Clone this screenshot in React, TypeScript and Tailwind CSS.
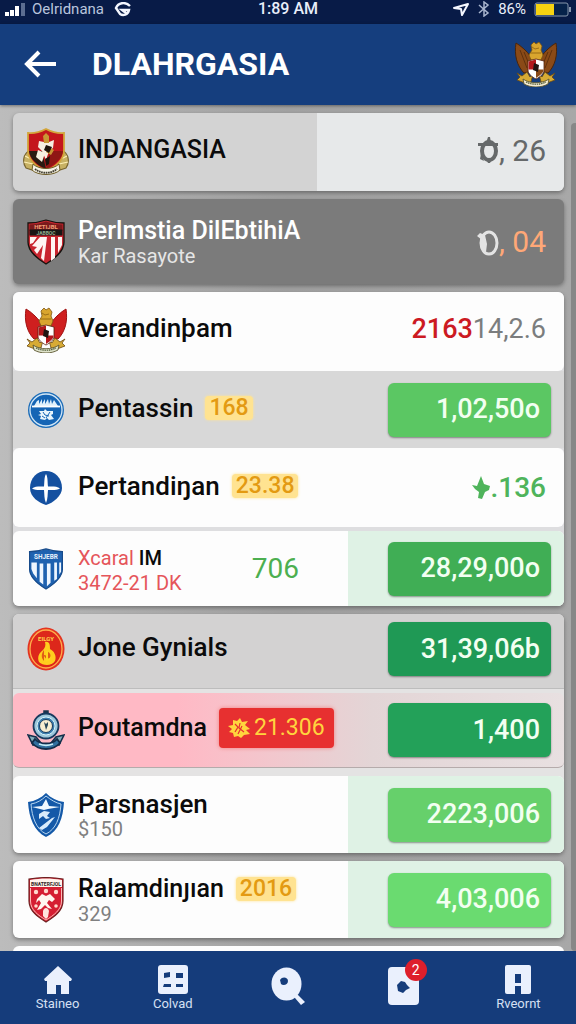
import type { ReactNode } from "react";

function GarudaCrest({ tone, className }: { tone: "brown" | "red"; className: string }) {
  const wing = tone === "brown" ? "#8a4a17" : "#cf1f1f";
  const edge = tone === "brown" ? "#4c2508" : "#a01212";
  return (
    <svg viewBox="0 0 44 46" className={className} aria-hidden="true">
      <path d="M2 2c5 3 11 8 15 14l1 14-8 2C3 25 0 14 2 2z" fill={wing} stroke={edge} strokeWidth="1" />
      <path d="M42 2c-5 3-11 8-15 14l-1 14 8 2C41 25 44 14 42 2z" fill={wing} stroke={edge} strokeWidth="1" />
      {tone === "brown" && <path d="M6 9l7 18M10 11l5 12M38 9l-7 18M34 11l-5 12" stroke={edge} strokeWidth=".7" fill="none" />}
      <path d="M3 32l5 3 5-4 3 5 3-3-2 8-6 1-8-3 3-3zM41 32l-5 3-5-4-3 5-3-3 2 8 6 1 8-3-3-3z" fill="#d7ab35" stroke="#6b4a12" strokeWidth=".8" />
      <path d="M17 4l3-3 2 2 3-2 3 4-1 4 2 5-2 5H17l-2-5 3-5z" fill="#d9a52e" stroke="#7d5513" strokeWidth=".8" />
      <path d="M18 6l3 2 4-1M17 12h10" stroke="#8b6110" strokeWidth=".8" fill="none" />
      <path d="M14 20l8-2 8 2v9c0 4-4 7-8 9-4-2-8-5-8-9z" fill="#fff" stroke="#54210b" strokeWidth=".8" />
      <path d="M14.500 20.500l7.500-2v10h-7.500z" fill="#b3191c" />
      <path d="M22 28.500h7.500c0 4-4 6-7.500 8.500z" fill={tone === "brown" ? "#8a4a17" : "#b3191c"} />
      <path d="M20 22l5 2-1 7-5-2z" fill="#221512" />
      <path d="M9 38c7 5 19 5 26 0l-1 5c-7 4-17 4-24 0z" fill={tone === "brown" ? "#f3ead2" : "#dfe3cb"} stroke="#5b5731" strokeWidth=".9" />
      <path d="M12 41c6 3 14 3 20 0" stroke="#4d5a35" strokeWidth="1.200" strokeDasharray="1.500 .7" fill="none" />
    </svg>
  );
}

function ShieldCrest() {
  return (
    <svg viewBox="0 0 46 48" className="h-12 w-[46px]" aria-hidden="true">
      <path d="M7 22c-7 4-8 12-4 18l12 4M39 22c7 4 8 12 4 18l-12 4" fill="#c7b163" stroke="#7a6630" strokeWidth="1.200" />
      <path d="M2 28l8 4M1 34l9 2M44 28l-8 4M45 34l-9 2" stroke="#fff0b5" strokeWidth="1.200" />
      <path d="M5 5c7 1 12-1 18-4 6 3 11 5 18 4v17c0 10-9 17-18 21C14 39 5 32 5 22z" fill="#c4161c" stroke="#d3a53a" strokeWidth="1.800" />
      <path d="M27 23h13c-1 8-9 14-17 18z" fill="#8f1714" />
      <path d="M6 23h13l4 18C14 37 7 31 6 23z" fill="#2a1a12" />
      <path d="M16 13l5 1 2-5 3 5 5-2-1 8-4 3-3 9-4-9-4-4z" fill="#f7eee2" />
      <path d="M20 8l3-3 3 3v7h-5zM26 19l5 3-3 5-5-3z" fill="#c99634" />
      <path d="M15 22l7 3-3 9-6-5z" fill="#f6efe0" />
      <path d="M23 17l6 2-3 6-5-3zM22 31l5-3-1 8-3 2z" fill="#1f130d" />
      <path d="M10 36c6 6 20 6 26 0l1 6c-6 6-22 6-28 0z" fill="#f6f3e6" stroke="#6d5c25" strokeWidth="1" />
      <path d="M12 41c6 5 16 5 22 0" stroke="#444132" strokeWidth="1.800" strokeDasharray="1.700 .6" fill="none" />
    </svg>
  );
}

function StripedShield({ tone, className }: { tone: "red" | "blue"; className: string }) {
  const red = tone === "red";
  return (
    <svg viewBox="0 0 38 46" className={className} aria-hidden="true">
      <path d="M1 4c7 0 12-1 18-3 6 2 11 3 18 3v19c0 10-10 17-18 22C11 40 1 33 1 23z" fill={red ? "#c9252f" : "#1f62b0"} stroke={red ? "#16130f" : "#174b8b"} strokeWidth="1.300" />
      {red && <path d="M2.500 5.500c6 0 11-1 16.500-3 5.500 2 10.500 3 16.500 3V12h-33z" fill="#7a1a1c" />}
      {red && <path d="M2.500 10.500h33v6h-33z" fill="#181514" />}
      <text x="19" y={red ? 9.500 : 12.500} textAnchor="middle" fontSize={red ? 6 : 7} fontWeight="700" fill={red ? "#f1a078" : "#e8f2fc"} fontFamily="Roboto, sans-serif">{red ? "HETIJBL" : "SHJEBR"}</text>
      {red ? (
        <>
          <text x="19" y="15.500" textAnchor="middle" fontSize="5" fontWeight="700" fill="#8faa8d" fontFamily="Roboto, sans-serif">JABBOC</text>
          <path d="M3 18h7l-4 6-3 1zM13 18h7l-3 24-3-3 2-13-6 9-3-4 3-3-5-1zM24 18h4v21l-4 3zM31 18h4v8l-4 8z" fill="#fff5f3" />
        </>
      ) : (
        <path d="M3 16h6v17l-4-5-2-5zM12 17h4v23l-4-3zM20 17h4v21l-4 4zM28 16h3v18l-3 2zM33.500 16h2v10l-2 3z" fill="#eef6ff" />
      )}
    </svg>
  );
}

function BlueSeal() {
  return (
    <svg viewBox="0 0 38 38" className="size-[38px]" aria-hidden="true">
      <circle cx="19" cy="19" r="18" fill="#1b6cb8" />
      <circle cx="19" cy="19" r="16" fill="#1565b5" stroke="#d3e7f6" strokeWidth="1.300" />
      <path d="M7 15l3-5 2-1v4l3-5v5l3-5v5l3-5 1 5 2-5 1 5 2-4 4 6z" fill="#dff0fb" />
      <path d="M5 15.500h28" stroke="#fff" strokeWidth="1.800" />
      <path d="M12 20h5l1-2 2 2h6v3l-2 1 3 4-5 1-2-2-2 2-5-1 1-3-3-1 3-1z" fill="#e9f5fc" />
      <path d="M16 21l2 3 4 1M23 21l-4 6M15 25l3 2" stroke="#1565b5" strokeWidth="1" fill="none" />
    </svg>
  );
}

function BlueCross() {
  return (
    <svg viewBox="0 0 34 36" className="h-9 w-[34px]" aria-hidden="true">
      <path d="M17 1c9 0 16 7 16 17 0 8-9 15-16 17C10 33 1 27 1 18 1 8 8 1 17 1z" fill="#1450a0" />
      <path d="M17 4c2 3 1.500 9 2 12.500 4 0 9-.5 12 2-3 2-8 1.500-12 1.500-.5 4 0 9-2 13-2-4-1.500-9-2-13-4 0-9 .5-12-1.500 3-2.500 8-2 12-2 .5-3.500 0-9.500 2-12.500z" fill="#fff" />
    </svg>
  );
}

function FlameSeal() {
  return (
    <svg viewBox="0 0 38 44" className="h-11 w-[38px]" aria-hidden="true">
      <ellipse cx="19" cy="22" rx="18.500" ry="21.500" fill="#e33420" />
      <ellipse cx="19" cy="22" rx="16" ry="19" fill="#dd271b" stroke="#ffad4b" strokeWidth="1.300" />
      <text x="19" y="13.500" textAnchor="middle" fontSize="6" fontWeight="700" fill="#ffd24a" fontFamily="Roboto, sans-serif">EILGY</text>
      <path d="M18 15c5-1 5 4 5 7 4 2 7 7 5 12-3 5-12 5-16 1-2-5 0-9 4-12 2-2 3-5 2-8z" fill="#ffce1e" />
      <path d="M17 23c-3 4-3 8 0 11v-5l3 4c5-2 4-7 1-8v4l-4-1z" fill="#e15c16" />
      <path d="M20 24v9l3-1" stroke="#ffd51e" strokeWidth="2" fill="none" />
    </svg>
  );
}

function DiverCrest() {
  return (
    <svg viewBox="0 0 38 40" className="h-10 w-[38px]" aria-hidden="true">
      <path d="M1 25l8 2 5 6-8 2zM37 25l-8 2-5 6 8 2z" fill="#82adb9" stroke="#15304b" strokeWidth="1.600" />
      <path d="M8 29c5 6 17 6 22 0l3 4c-7 8-21 8-28 0z" fill="#31709f" stroke="#132d4a" strokeWidth="1.800" />
      <path d="M12 34c5 2 9 2 14 0" stroke="#c8edf6" strokeWidth="1.600" fill="none" />
      <path d="M17 4V1h4v3" fill="#1b354c" stroke="#1b354c" strokeWidth="1.500" />
      <circle cx="19" cy="16" r="12.500" fill="#9bc7db" stroke="#173a5d" strokeWidth="1.800" />
      <circle cx="19" cy="16" r="9" fill="#3d7eae" stroke="#d9f5fb" />
      <circle cx="19" cy="16" r="6.500" fill="#f7edd1" stroke="#173a5d" />
      <path d="M17 12l2 2 2-2v3l-2 5-1-4" fill="#27465a" />
    </svg>
  );
}

function BlueShield() {
  return (
    <svg viewBox="0 0 38 46" className="h-[46px] w-[38px]" aria-hidden="true">
      <path d="M19 1c5 5 11 8 18 9-1 16-5 29-18 35C7 39 2 26 1 10 8 9 14 6 19 1z" fill="#1459a8" />
      <path d="M19 4c5 4 10 7 15 8-1 14-5 25-15 30C9 37 5 25 4 12c6-1 11-4 15-8z" fill="none" stroke="#b6d5f0" strokeWidth="1" />
      <path d="M19 7l3 7 11 1-12 2-4 1-12-3 10-1z" fill="#f0f8ff" />
      <path d="M12 22l5-3 6 1-3 4 3 2-4 1-3-3-4 3zM12 36l13-10 3-1-8 10-5 3z" fill="#d9ecfb" />
    </svg>
  );
}

function RedShield() {
  return (
    <svg viewBox="0 0 36 46" className="h-[46px] w-9" aria-hidden="true">
      <path d="M1 2c12-2 22-2 34 0v22c0 10-9 16-17 21C10 40 1 34 1 24z" fill="#d51e32" stroke="#6d2020" strokeWidth="1.200" />
      <path d="M2 3c11-2 21-2 32 0v7H2z" fill="#fff4ed" />
      <text x="18" y="8.500" textAnchor="middle" fontSize="5" fontWeight="700" fill="#332422" fontFamily="Roboto, sans-serif">BNATERFJOL</text>
      <path d="M2.500 11v13c0 9 8 14.500 15.500 19C25.500 38.500 33.500 33 33.500 24V11" fill="none" stroke="#ffb8b6" strokeWidth="1" />
      <path d="M9 22l5-5 4 2 4-2 5 5-3 3-3-2-2 3 5 6-4-1-3-3-4 4-4 1 4-7-2-3-3 3z" fill="#fff6ef" />
      <path d="M15 34c1-4 5-4 6 0l-1 6-2 2-3-3z" fill="#ffe4dd" />
      <circle cx="8" cy="15" r="2.200" fill="#ffd9cc" />
      <circle cx="18" cy="14" r="2.200" fill="#ffd9cc" />
      <circle cx="28" cy="15" r="2.200" fill="#ffd9cc" />
      <circle cx="8" cy="29" r="1.800" fill="#ffd9cc" />
      <circle cx="28" cy="29" r="1.800" fill="#ffd9cc" />
    </svg>
  );
}

function Spark({ className }: { className: string }) {
  return (
    <svg viewBox="0 0 18 24" className={className} aria-hidden="true">
      <path d="M9 0l3 8 6 2-1 4-4 2-3 7-4-1 1-6-4-3-3-4 5 1z" fill="currentColor" />
    </svg>
  );
}

function Burst() {
  return (
    <svg viewBox="0 0 22 20" className="h-5 w-[22px]" aria-hidden="true">
      <path d="M5 2l4 1 3-3 2 4 6-1-3 4 5 4-4 1 4 4-6 1-3 3-3-2-4 1-1-4-4-1 3-3-4-3 5-1z" fill="currentColor" />
      <path d="M7 6l3 3-3 5M12 5l-1 5 5 4M14 8l-4 8" stroke="#e73030" strokeWidth="1.200" fill="none" />
    </svg>
  );
}

function RingMark({ dark }: { dark: boolean }) {
  return (
    <svg viewBox="0 0 22 28" className="h-7 w-[22px]" aria-hidden="true">
      <ellipse cx="12" cy="15" rx={dark ? 7 : 8} ry={dark ? 9 : 11} fill="none" stroke="currentColor" strokeWidth={dark ? 4 : 3} />
      {dark ? (
        <path d="M1 7h8l2-6h2l1 6h7v3H1zM4 18l3 7-4-2zM9 23h6l-2 4h-2z" fill="currentColor" />
      ) : (
        <path d="M0 8l3-3 5 2 2 9-1 8-5-3 1-9z" fill="currentColor" />
      )}
    </svg>
  );
}

function Tag({ children }: { children: ReactNode }) {
  return <span className="rounded-sm bg-[#ffe391] px-1 text-[23px] leading-6 text-[#e39a12] shadow-[0_0_3px_#ffe391]">{children}</span>;
}

function Amount({ tone, children }: { tone: "lime" | "mint" | "leaf" | "green" | "forest" | "jade"; children: ReactNode }) {
  const tones = {
    lime: "bg-[#5bc763]",
    mint: "bg-[#66d06b]",
    leaf: "bg-[#6adb70]",
    green: "bg-[#40ae55]",
    forest: "bg-[#1f9955]",
    jade: "bg-[#23a159]",
  };
  return (
    <button type="button" className={`h-[54px] w-[163px] rounded-md pr-[11px] text-right text-[27px] font-medium text-[#f2fff1] shadow-[0_1px_2px_rgba(0,0,0,0.4)] ${tones[tone]}`}>
      {children}
    </button>
  );
}

type RowProps = {
  crest: ReactNode;
  name: ReactNode;
  note?: ReactNode;
  extra?: ReactNode;
  end: ReactNode;
  className: string;
  nameSize?: string;
  endClassName?: string;
};

function Row({ crest, name, note, extra, end, className, nameSize = "text-[26px]", endClassName = "w-[216px] pr-[13px]" }: RowProps) {
  return (
    <li className={`flex shrink-0 overflow-hidden ${className}`}>
      <div className="flex min-w-0 flex-1 items-center pl-[10px]">
        <span className="flex w-[46px] shrink-0 justify-center">{crest}</span>
        <div className={`ml-[9px] whitespace-nowrap ${note ? "" : "pb-1"}`}>
          <div className={`flex items-center gap-3 leading-7 font-medium text-[#0b0b0b] ${nameSize}`}>{name}</div>
          {note && <div className="text-xl leading-[22px]">{note}</div>}
        </div>
        {extra}
      </div>
      <div className={`flex shrink-0 items-center justify-end ${endClassName}`}>{end}</div>
    </li>
  );
}

const shadow = "shadow-[0_2px_4px_rgba(0,0,0,0.35)]";
const tint = "w-[216px] pr-[13px] bg-[#dff2e5]";

function StatusBar() {
  return (
    <div className="grid h-6 shrink-0 grid-cols-[1fr_auto_1fr] items-start bg-[#081b47] text-base leading-[18px] text-[#e8eefa]">
      <div className="flex items-center gap-[6px] pl-1">
        <svg viewBox="0 0 22 15" className="h-[15px] w-[22px]" aria-hidden="true">
          <path d="M1 10h4v4H1zM6 8h4v6H6zM11 4h4v10h-4z" fill="#fff" />
          <path d="M17 1h4v13h-4z" fill="#5c6d90" />
        </svg>
        <span className="text-[15px] text-[#b9c5dd]">Oelridnana</span>
        <svg viewBox="0 0 18 15" className="ml-1 h-[15px] w-[18px]" aria-hidden="true">
          <path d="M16 4C11-1 4 1 2 6l4 6c3 2 8 1 9-4H8l4 3" fill="none" stroke="#f4f7ff" strokeWidth="2.400" />
        </svg>
      </div>
      <span className="font-medium">1:89 AM</span>
      <div className="flex items-center justify-end gap-2 pr-1">
        <svg viewBox="0 0 18 15" className="h-[15px] w-[18px]" aria-hidden="true">
          <path d="M2 6l14-4-6 11-1-6z" fill="none" stroke="#f4f7ff" strokeWidth="2" strokeLinejoin="round" />
        </svg>
        <svg viewBox="0 0 12 16" className="h-4 w-3" aria-hidden="true">
          <path d="M1 4l9 8-4 3V1l4 3-9 8" fill="none" stroke="#a9b6cf" strokeWidth="1.500" />
        </svg>
        <span className="text-[15px]">86%</span>
        <svg viewBox="0 0 38 15" className="h-[15px] w-[38px]" aria-hidden="true">
          <rect x="1" y="1" width="33" height="13" rx="2" fill="#06224a" stroke="#8797ad" />
          <path d="M2 2h18v11H2z" fill="#f6d211" />
          <path d="M35 5h2v5h-2z" fill="#8797ad" />
        </svg>
      </div>
    </div>
  );
}

function NavItem({ label, name, children }: { label?: string; name: string; children: ReactNode }) {
  return (
    <a href={`#${name.toLowerCase()}`} aria-label={name} className="flex flex-col items-center pt-[14px] text-[13px] leading-4 text-[#d5e0f3]">
      {children}
      {label && <span className="mt-[2px]">{label}</span>}
    </a>
  );
}

export default function App() {
  return (
    <div className="flex h-screen flex-col overflow-hidden bg-[#a5a5a5] font-['Roboto',sans-serif]">
      <StatusBar />
      <header className="z-10 flex h-[81px] shrink-0 items-center bg-[#153e7e] pr-[18px] pb-[2px] pl-6 shadow-[0_1px_3px_rgba(0,0,0,0.4)]">
        <button type="button" aria-label="Back" className="text-white">
          <svg viewBox="0 0 32 28" className="h-7 w-8" fill="none" stroke="currentColor" strokeWidth="4" aria-hidden="true">
            <path d="M15 2L3 14l12 12M3 14h29" />
          </svg>
        </button>
        <h1 className="ml-9 flex-1 text-[32px] leading-10 font-bold text-white">DLAHRGASIA</h1>
        <GarudaCrest tone="brown" className="h-[46px] w-11" />
      </header>

      <main className="relative min-h-0 flex-1 overflow-hidden bg-linear-to-r from-[#bcbcbc] via-[#a2a2a2] to-[#a8a8a8] pt-2 pr-3 pl-[13px]">
        <div className="absolute top-[18px] right-0 bottom-0 w-[5px] rounded-l-sm bg-[#878787]" />
        <ul className="flex flex-col gap-2">
          <Row
            crest={<ShieldCrest />}
            name={<span>INDANGASIA</span>}
            nameSize="text-[25px]"
            className={`h-[78px] rounded-md bg-[#d3d3d3] ${shadow}`}
            endClassName="w-[247px] pr-[18px] pb-1 bg-[#e7e9ea]"
            end={<span className="flex items-center text-[30px] text-[#66696a]"><RingMark dark /><span className="whitespace-pre">, 26</span></span>}
          />
          <Row
            crest={<StripedShield tone="red" className="h-[46px] w-[38px]" />}
            name={<span className="text-white">Perlmstia DilEbtihiA</span>}
            note={<span className="text-[#e6e6e6]">Kar Rasayote</span>}
            nameSize="text-[25px]"
            className={`h-[85px] rounded-md bg-[#7b7b7b] ${shadow}`}
            endClassName="w-[120px] pr-[18px]"
            end={<span className="flex items-center text-[30px] text-[#ffa877]"><span className="text-[#e3e3e3]"><RingMark dark={false} /></span><span className="whitespace-pre">, 04</span></span>}
          />
          <li>
            <ul className={`flex flex-col rounded-md bg-[#dedee0] ${shadow}`}>
              <Row
                crest={<GarudaCrest tone="red" className="h-[46px] w-11" />}
                name={<span>Verandinþam</span>}
                className="h-[79px] rounded-md bg-[#fdfdfd] pb-1"
                end={<span className="pr-[5px] text-[27px] text-[#7b7d7e]"><span className="font-medium text-[#cc1a22]">2163</span>14,2.6</span>}
              />
              <Row
                crest={<BlueSeal />}
                name={<><span>Pentassin</span><Tag>168</Tag></>}
                className="h-[77px] bg-[#d8d8d8]"
                end={<Amount tone="lime">1,02,50o</Amount>}
              />
              <Row
                crest={<BlueCross />}
                name={<><span>Pertandiŋan</span><Tag>23.38</Tag></>}
                className="mb-1 h-[79px] rounded-md bg-[#fdfdfd]"
                end={<span className="flex items-center pr-[5px] text-[28px] font-medium text-[#4fb45b]"><Spark className="h-6 w-[18px]" />.136</span>}
              />
              <Row
                crest={<StripedShield tone="blue" className="h-[42px] w-9" />}
                name={<span><span className="font-normal text-[#e5555a]">Xcaral</span> IM</span>}
                note={<span className="text-[#e5555a]">3472-21 DK</span>}
                nameSize="text-xl"
                extra={<span className="mr-[49px] ml-auto text-[28px] text-[#4caf50]">706</span>}
                className="h-[75px] rounded-md bg-[#fdfdfd]"
                endClassName={tint}
                end={<Amount tone="green">28,29,00o</Amount>}
              />
            </ul>
          </li>
          <li>
            <ul className={`flex flex-col rounded-md bg-[#e4e3e3] ${shadow}`}>
              <Row
                crest={<FlameSeal />}
                name={<span>Jone Gynials</span>}
                className="mb-1 h-[75px] rounded-t-md border-b border-[#bdbdbd] bg-[#d3d2d2] pb-1"
                end={<Amount tone="forest">31,39,06b</Amount>}
              />
              <Row
                crest={<DiverCrest />}
                name={
                  <>
                    <span>Poutamdna</span>
                    <span className="flex h-10 items-center gap-1 rounded-sm bg-[#e73030] px-[9px] text-[23px] font-normal text-[#ffd43e] shadow-[0_0_4px_#f08080]">
                      <Burst />
                      21.306
                    </span>
                  </>
                }
                nameSize="text-[25px]"
                className="mb-2 h-[75px] rounded-md border-b border-[#b5abab] bg-linear-to-r from-[#ffb9c5] from-30% via-[#e3d5d6] via-65% to-[#e8e0e1]"
                end={<Amount tone="jade">1,400</Amount>}
              />
              <Row
                crest={<BlueShield />}
                name={<span>Parsnasjen</span>}
                note={<span className="text-[#808080]">$150</span>}
                className="h-[77px] rounded-md bg-[#fdfdfd]"
                endClassName={tint}
                end={<Amount tone="mint">2223,006</Amount>}
              />
            </ul>
          </li>
          <Row
            crest={<RedShield />}
            name={<><span>Ralamdinȷıan</span><Tag>2016</Tag></>}
            note={<span className="text-[#808080]">329</span>}
            nameSize="text-[25px]"
            className={`h-[77px] rounded-md bg-[#fdfdfd] ${shadow}`}
            endClassName={tint}
            end={<Amount tone="leaf">4,03,006</Amount>}
          />
          <li className="h-[77px] rounded-md bg-[#fdfdfd]" />
        </ul>
      </main>

      <nav aria-label="Main" className="grid h-[73px] shrink-0 grid-cols-5 bg-[#153c7b]">
        <NavItem name="Staineo" label="Staineo">
          <svg viewBox="0 0 30 29" className="h-[29px] w-[30px]" aria-hidden="true">
            <path d="M15 1l14 13-1 2h-2v13h-8v-9h-5v9H4V16H2l-1-2z" fill="#eaf0fd" />
          </svg>
        </NavItem>
        <NavItem name="Colvad" label="Colvad">
          <svg viewBox="0 0 30 29" className="h-[29px] w-[30px]" aria-hidden="true">
            <rect width="30" height="29" rx="3" fill="#eaf0fd" />
            <path d="M6 8l6-1v5l-6 1zM18 8h7v5h-7zM6 19h7v3H5zM18 19h7v3h-7z" fill="#153c7b" />
          </svg>
        </NavItem>
        <NavItem name="Search">
          <svg viewBox="0 0 34 38" className="mt-[2px] h-[38px] w-[34px]" aria-hidden="true">
            <ellipse cx="15.500" cy="17" rx="15" ry="16.500" fill="#eaf0fd" />
            <path d="M22 27l5 1 7 7-4 3-6-7z" fill="#eaf0fd" />
            <path d="M9 13c2-4 8-3 8 1s-5 5-7 3z" fill="#153c7b" />
          </svg>
        </NavItem>
        <NavItem name="Messages">
          <span className="relative mt-[2px]">
            <svg viewBox="0 0 31 38" className="h-[38px] w-[31px]" aria-hidden="true">
              <rect width="31" height="38" rx="4" fill="#eaf0fd" />
              <path d="M9 18l4-4 4 1 2 3 3 3-4 2-3 3-5-2z" fill="#153c7b" />
            </svg>
            <span className="absolute -top-2 -right-2 flex size-[22px] items-center justify-center rounded-full bg-[#de1f2b] text-sm text-white">2</span>
          </span>
        </NavItem>
        <NavItem name="Rveornt" label="Rveornt">
          <svg viewBox="0 0 26 29" className="h-[29px] w-[26px]" aria-hidden="true">
            <rect width="26" height="29" rx="2" fill="#eaf0fd" />
            <path d="M10 9h6v9h-6zM10 21h6v8h-6z" fill="#153c7b" />
          </svg>
        </NavItem>
      </nav>
    </div>
  );
}
